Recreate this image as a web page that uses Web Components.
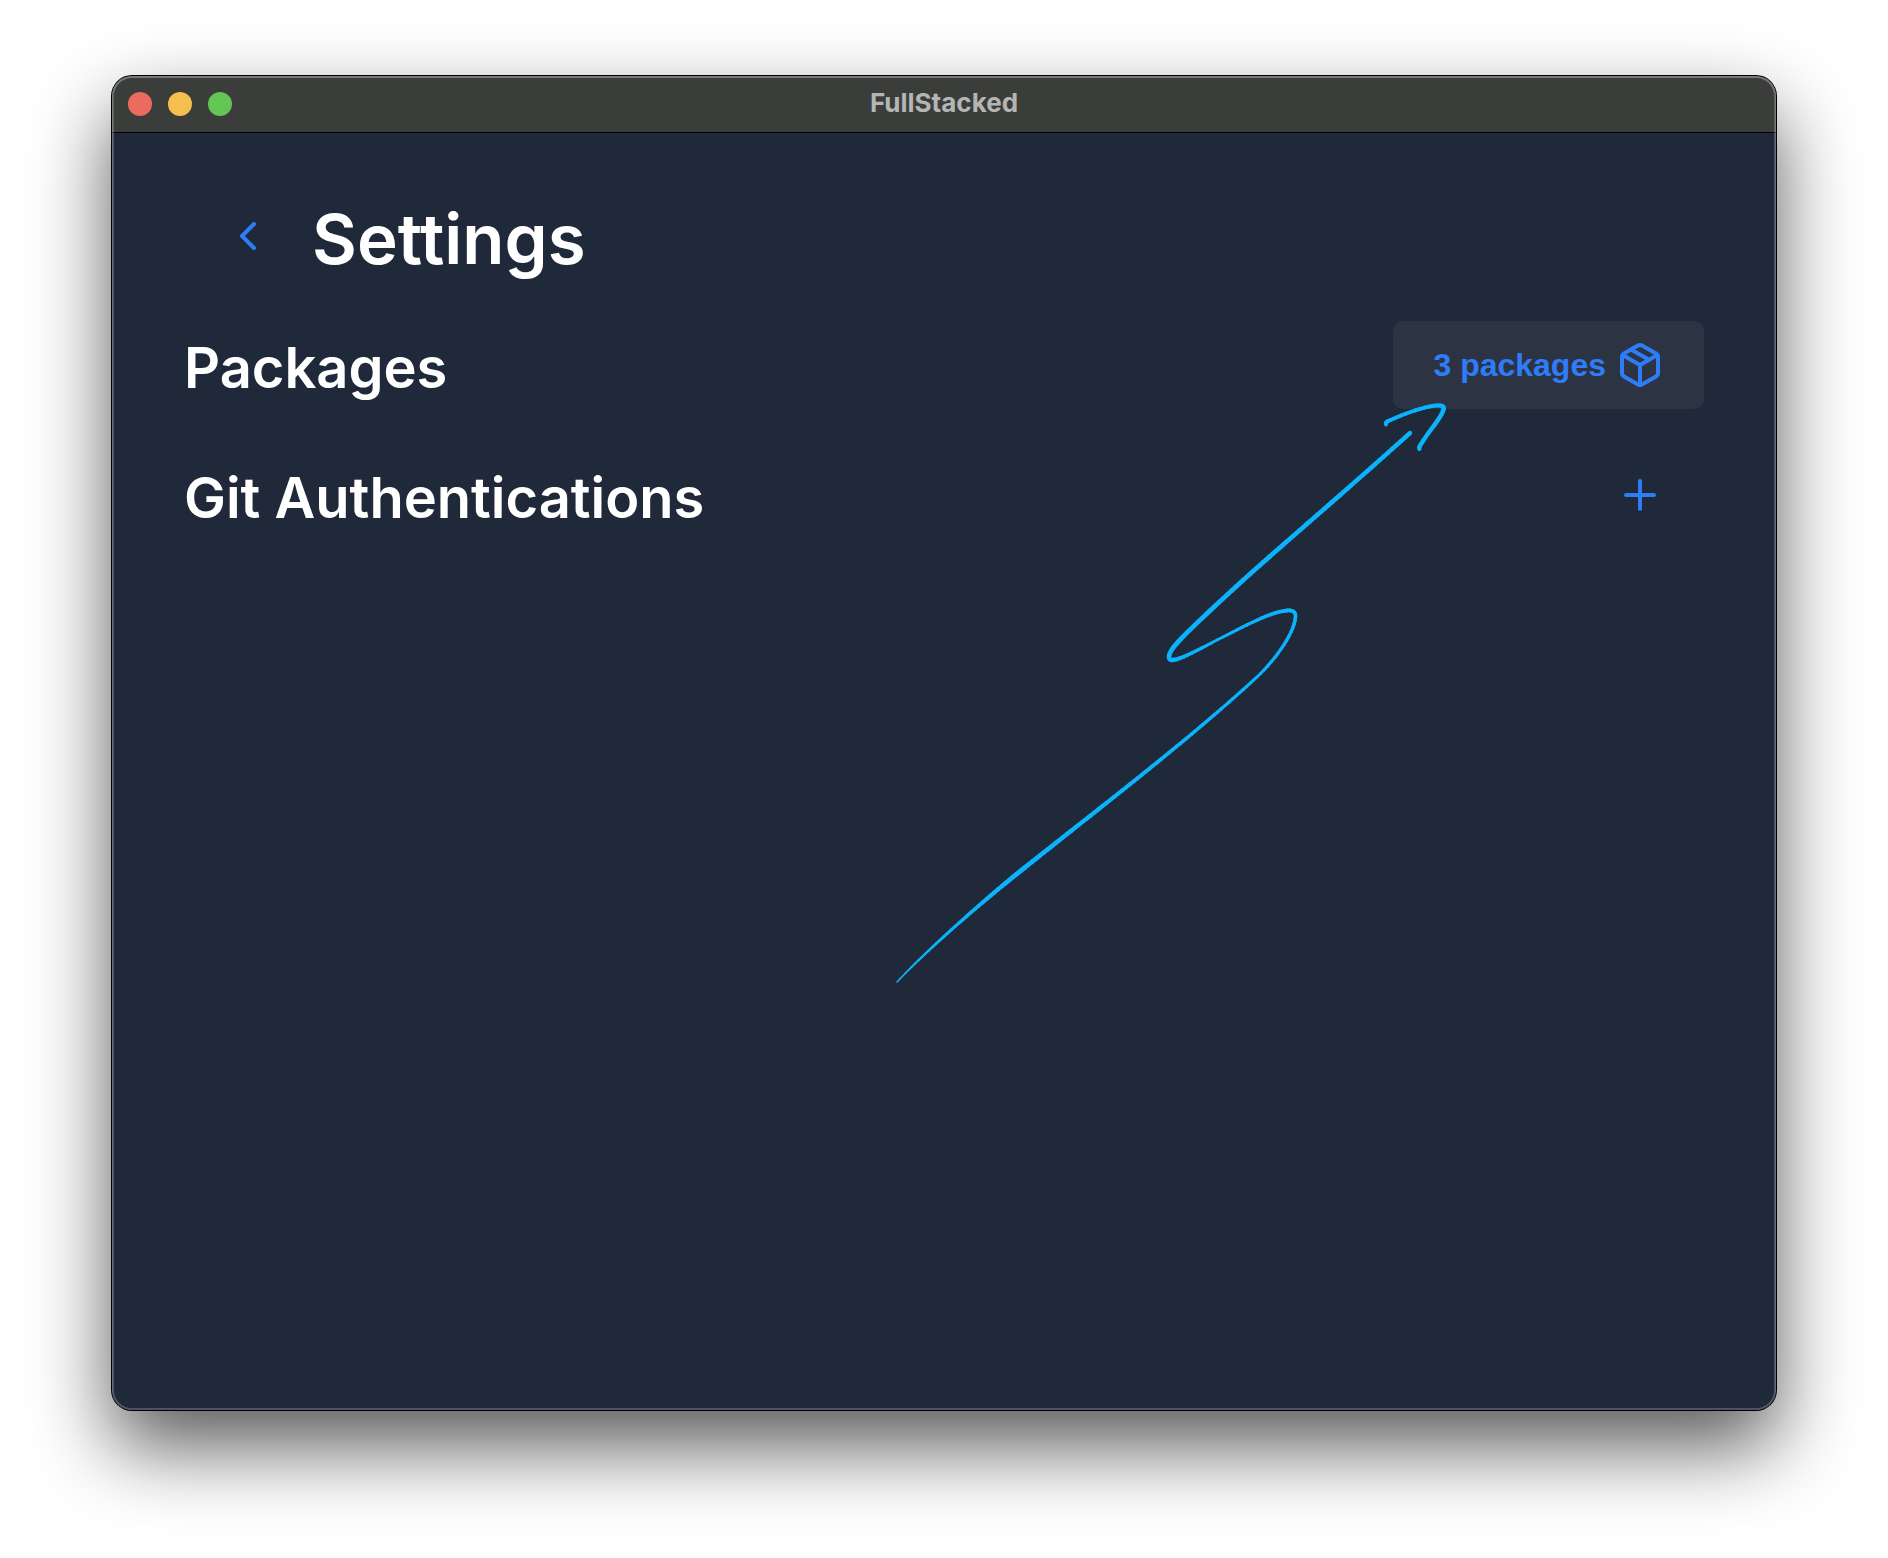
<!DOCTYPE html>
<html lang="en">
<head>
<meta charset="utf-8">
<title>FullStacked</title>
<style>
html { background: #fff; }
body { margin: 0; min-height: 100vh; box-sizing: border-box; padding: 76px 112px 148px; display: flex; flex-direction: column; overflow: hidden; font-family: Inter, "Liberation Sans", sans-serif; }
</style>
</head>
<body>
<app-window label="FullStacked">
  <settings-view>
    <view-header slot="header">Settings</view-header>
    <settings-row>Packages
      <tool-button slot="action" filled icon="package">3 packages</tool-button>
    </settings-row>
    <settings-row>Git Authentications
      <tool-button slot="action" icon="plus" label="Add git authentication"></tool-button>
    </settings-row>
  </settings-view>
  <hand-arrow slot="overlay"></hand-arrow>
</app-window>
<script>
const ICONS = {
  back: '<path d="m15 18-6-6 6-6"/>',
  plus: '<path d="M5 12h14M12 5v14"/>',
  package: '<path d="m7.5 4.27 9 5.15"/><path d="M21 8a2 2 0 0 0-1-1.73l-7-4a2 2 0 0 0-2 0l-7 4A2 2 0 0 0 3 8v8a2 2 0 0 0 1 1.73l7 4a2 2 0 0 0 2 0l7-4A2 2 0 0 0 21 16Z"/><path d="m3.3 7 8.7 5 8.7-5"/><path d="M12 22V12"/>'
};

class AppWindow extends HTMLElement {
  connectedCallback() {
    this.attachShadow({ mode: 'open' }).innerHTML = `
      <style>
        :host { flex: 1; display: flex; flex-direction: column; position: relative; border-radius: 20px; background: #20293a; box-shadow: 0 0 0 1px #000, 0 36px 80px rgba(0,0,0,.66); }
        header { display: grid; grid-template-columns: 1fr auto 1fr; align-items: center; height: 56px; padding: 0 16px; border-bottom: 1px solid #000; border-radius: 20px 20px 0 0; background: #3b3d3b; }
        .lights { display: flex; gap: 16px; }
        i { width: 24px; height: 24px; border-radius: 50%; }
        .close { background: #ed6a5f; } .min { background: #f5bf4f; } .max { background: #62c554; }
        b { padding-bottom: 2px; font-size: 26px; line-height: 32px; font-weight: 700; color: #b4b6b4; }
        main { flex: 1; display: flex; flex-direction: column; }
        .rim { position: absolute; inset: 0; border-radius: 20px; box-shadow: inset 0 0 0 2px rgba(255,255,255,.2), inset 0 1px 0 1px rgba(255,255,255,.14); pointer-events: none; }
      </style>
      <header><div class="lights"><i class="close"></i><i class="min"></i><i class="max"></i></div><b></b></header>
      <main><slot></slot></main>
      <div class="rim"></div>
      <slot name="overlay"></slot>`;
    this.shadowRoot.querySelector('b').textContent = this.getAttribute('label');
  }
}

class SettingsView extends HTMLElement {
  connectedCallback() {
    this.attachShadow({ mode: 'open' }).innerHTML = `
      <style>
        :host { display: block; padding: 59px 72px; color: #fff; }
        .rows { display: flex; flex-direction: column; gap: 42px; margin-top: 41px; }
      </style>
      <slot name="header"></slot>
      <div class="rows"><slot></slot></div>`;
  }
}

class ViewHeader extends HTMLElement {
  connectedCallback() {
    this.attachShadow({ mode: 'open' }).innerHTML = `
      <style>
        :host { display: flex; align-items: center; }
        h1 { margin: 0; padding-top: 6px; font-size: 69px; line-height: 82px; font-weight: 600; }
      </style>
      <tool-button icon="back" label="Back"></tool-button>
      <h1><slot></slot></h1>`;
  }
}

class SettingsRow extends HTMLElement {
  connectedCallback() {
    this.attachShadow({ mode: 'open' }).innerHTML = `
      <style>
        :host { display: flex; align-items: center; justify-content: space-between; }
        h2 { margin: 0; padding-top: 6px; font-size: 56px; line-height: 72px; font-weight: 600; }
      </style>
      <h2><slot></slot></h2>
      <slot name="action"></slot>`;
  }
}

class ToolButton extends HTMLElement {
  connectedCallback() {
    this.attachShadow({ mode: 'open' }).innerHTML = `
      <style>
        :host { display: block; }
        button { display: flex; align-items: center; gap: 10px; padding: 20px 40px; border: 0; border-radius: 10px; background: none; color: #2f7cf8; font: 700 32px/48px "Liberation Sans", Arial, sans-serif; cursor: pointer; }
        :host([filled]) button { background: #2c3444; }
        .text { display: none; }
        :host([filled]) .text { display: block; }
        svg { display: block; width: 48px; height: 48px; fill: none; stroke: currentColor; stroke-width: 2; stroke-linecap: round; stroke-linejoin: round; }
      </style>
      <button type="button"><span class="text"><slot></slot></span><svg viewBox="0 0 24 24" aria-hidden="true">${ICONS[this.getAttribute('icon')]}</svg></button>`;
    if (this.hasAttribute('label')) this.shadowRoot.querySelector('button').setAttribute('aria-label', this.getAttribute('label'));
  }
}

/* Hand-drawn arrow. A stroke starts with x, y, pen width; each further row is
   a cubic curve: two control points, the end point and the pen width there. */
const STROKES = [
  [[897,982,1.5],
   [925,952,975,908,1013,877,4.7],
   [1094,812,1183,745,1257,677,3],
   [1275,660,1294,634,1295.5,617,3.6],
   [1296,612,1293,610,1287,610.5,3.8],
   [1270,612,1245,626,1223,637,2.8],
   [1201,648,1180,660.5,1171.5,660,4.4],
   [1167,659,1169,653.5,1173,648,4.6],
   [1181,637,1215,606,1240,583,4.6],
   [1290,538,1340,496,1410,433,4.4]],
  [[1386,424.5,4],
   [1385,422,1388,421,1393,419,3.8],
   [1405,413.5,1426,406,1437,405.5,4],
   [1443,405,1445,407,1443,411,4.4],
   [1440,419,1430,430,1423,441,4.2],
   [1419,447,1419,447,1419.5,449,4]]
];
class HandArrow extends HTMLElement {
  connectedCallback() {
    const f = n => n.toFixed(2);
    const draw = ([start, ...curves]) => {
      let [x0, y0, w0] = start, out = '';
      for (const [ax, ay, bx, by, x, y, w] of curves) {
        const at = (t, p, a, b, q) => f((1-t)**3 * p + 3*(1-t)**2*t * a + 3*(1-t)*t*t * b + t**3 * q);
        const n = Math.max(6, Math.ceil(Math.hypot(x - x0, y - y0) / 5));
        for (let i = 0; i < n; i++) {
          const t = i / n, u = (i + 1) / n;
          out += `<path d="M${at(t,x0,ax,bx,x)} ${at(t,y0,ay,by,y)}L${at(u,x0,ax,bx,x)} ${at(u,y0,ay,by,y)}" stroke-width="${f(w0 + (w - w0) * t)}"/>`;
        }
        x0 = x; y0 = y; w0 = w;
      }
      return out;
    };
    this.attachShadow({ mode: 'open' }).innerHTML = `
      <style>
        :host { position: absolute; inset: 0; pointer-events: none; }
        svg { display: block; width: 100%; height: 100%; fill: none; stroke: #0ab3fb; stroke-linecap: round; }
      </style>
      <svg viewBox="112 76 1664 1334" preserveAspectRatio="xMaxYMin meet" aria-hidden="true">${STROKES.map(draw).join('')}</svg>`;
  }
}

customElements.define('app-window', AppWindow);
customElements.define('settings-view', SettingsView);
customElements.define('view-header', ViewHeader);
customElements.define('settings-row', SettingsRow);
customElements.define('tool-button', ToolButton);
customElements.define('hand-arrow', HandArrow);
</script>
</body>
</html>
